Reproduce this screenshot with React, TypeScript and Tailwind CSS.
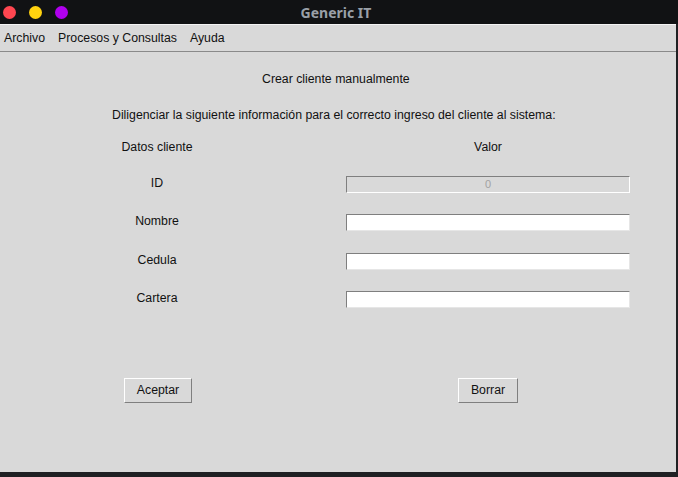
const fields = [
  { label: 'ID', value: '0', disabled: true, mt: 'mt-[22px]' },
  { label: 'Nombre', value: '', disabled: false, mt: 'mt-[21px]' },
  { label: 'Cedula', value: '', disabled: false, mt: 'mt-[22px]' },
  { label: 'Cartera', value: '', disabled: false, mt: 'mt-[21px]' },
];

function TkButton({ children }: { children: React.ReactNode }) {
  return (
    <button
      type="button"
      className="h-[25px] px-[12px] bg-[#d9d9d9] border border-t-white border-l-white border-b-[#7f7f7f] border-r-[#7f7f7f] text-[12.3px] text-[#111] leading-none"
    >
      {children}
    </button>
  );
}

export default function App() {
  return (
    <div
      className="w-[678px] h-[477px] bg-[#1f2023] flex flex-col overflow-hidden"
      style={{ fontFamily: '"Liberation Sans", Arial, sans-serif' }}
    >
      {/* Title bar */}
      <div className="h-[24px] bg-[#111214] flex items-center relative shrink-0">
        <div className="flex items-center gap-[13px] pl-[3px]">
          <span className="w-[13px] h-[13px] rounded-full bg-[#ff4650]" />
          <span className="w-[13px] h-[13px] rounded-full bg-[#ffd20f]" />
          <span className="w-[13px] h-[13px] rounded-full bg-[#b000ee]" />
        </div>
        <div
          className="absolute inset-0 flex items-center justify-center text-[14px] font-bold text-[#9aa0a8]"
          style={{ fontFamily: '"Noto Sans", "DejaVu Sans", sans-serif' }}
        >
          <span className="mr-[6px]">Generic IT</span>
        </div>
      </div>

      <div className="flex h-[448px] shrink-0">
        <div className="w-[676px] bg-[#d9d9d9] flex flex-col">
          {/* Menu bar */}
          <div className="h-[28px] border-t border-t-[#f4f4f4] border-b border-b-[#8a8a8a] flex items-center gap-[13px] pl-[4px] text-[12.3px] text-[#111]">
            <span>Archivo</span>
            <span>Procesos y Consultas</span>
            <span>Ayuda</span>
          </div>

          {/* Form */}
          <div className="flex flex-col text-[12.3px] text-[#111] leading-[14px]">
            <div className="pt-[20px] pl-[262px]">Crear cliente manualmente</div>
            <div className="mt-[22px] pl-[112px]">
              Diligenciar la siguiente información para el correcto ingreso del cliente al sistema:
            </div>

            <div className="mt-[18px] flex gap-[32px]">
              <div className="w-[314px] text-center">Datos cliente</div>
              <div className="w-[284px] text-center">Valor</div>
            </div>

            {fields.map((f) => (
              <div key={f.label} className={`${f.mt} flex items-center gap-[32px]`}>
                <div className="w-[314px] text-center pb-[3px]">{f.label}</div>
                <div
                  className={
                    f.disabled
                      ? 'w-[284px] h-[17px] bg-[#d9d9d9] border border-t-[#7f7f7f] border-l-[#7f7f7f] border-b-white border-r-white text-center text-[11px] leading-[14px] text-[#a3a3a3]'
                      : 'w-[284px] h-[17px] bg-white border border-t-[#7f7f7f] border-l-[#7f7f7f] border-b-[#e6e6e6] border-r-[#e6e6e6]'
                  }
                >
                  {f.value}
                </div>
              </div>
            ))}

            <div className="mt-[70px] flex gap-[32px]">
              <div className="w-[314px] flex justify-center pl-[2px]">
                <TkButton>Aceptar</TkButton>
              </div>
              <div className="w-[284px] flex justify-center">
                <TkButton>Borrar</TkButton>
              </div>
            </div>
          </div>
        </div>
        <div className="w-[2px]" />
      </div>
    </div>
  );
}
